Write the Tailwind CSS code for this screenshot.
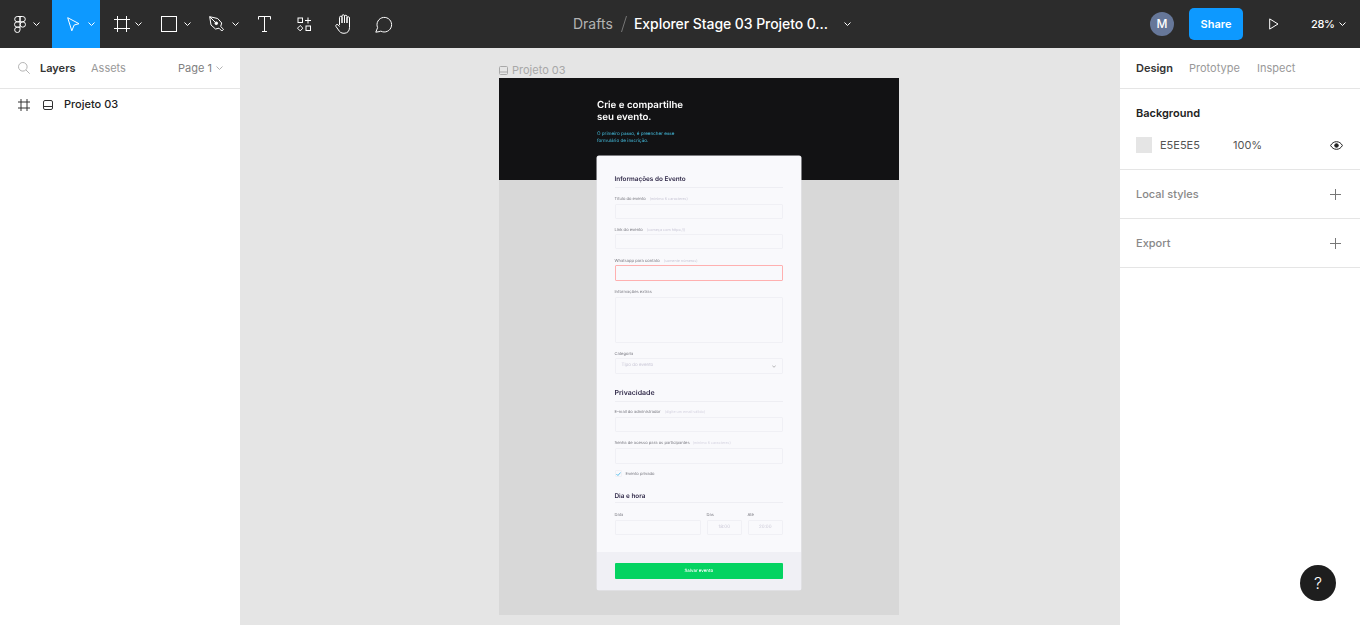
<!doctype html>
<html lang="pt-BR">
<head>
<meta charset="utf-8">
<title>Figma</title>
<script src="https://cdn.jsdelivr.net/npm/@tailwindcss/browser@4"></script>
</head>
<body class="m-0 overflow-hidden bg-white font-['Inter','Liberation_Sans',sans-serif]">
<div class="flex flex-col w-[1360px] h-[625px]">
  <!-- top bar -->
  <header class="flex items-center h-12 bg-[#2c2c2c] text-white shrink-0">
    <div class="flex items-center w-[52px] h-full pl-[14px]">
      <svg width="12" height="17" viewBox="0 0 12 17" fill="none" stroke="#fff" stroke-width="1"><path d="M6 .5H3.200a2.670 2.670 0 0 0 0 5.330H6zM6 .5h2.800a2.670 2.670 0 0 1 0 5.330H6zM6 5.830H3.200a2.670 2.670 0 0 0 0 5.340H6zM6 11.170H3.200A2.670 2.670 0 1 0 6 13.830z"/><circle cx="8.800" cy="8.500" r="2.670"/></svg>
      <svg class="ml-[7px]" width="7" height="4" viewBox="0 0 7 4" fill="none" stroke="#fff"><path d="M.5.500l3 3 3-3"/></svg>
    </div>
    <div class="flex items-center w-12 h-full bg-[#0d99ff] pl-[15px]">
      <svg width="13" height="15" viewBox="0 0 13 15" fill="none" stroke="#fff"><path d="M.7.700l11.300 6-4.800 1.300-2.400 5.800z"/></svg>
      <svg class="ml-[8px]" width="7" height="4" viewBox="0 0 7 4" fill="none" stroke="#fff"><path d="M.5.500l3 3 3-3"/></svg>
    </div>
    <div class="flex items-center w-12 h-full pl-[14px]">
      <svg width="16" height="16" viewBox="0 0 16 16" fill="none" stroke="#fff"><path d="M3.500 0v16M12.500 0v16M0 3.500h16M0 12.500h16"/></svg>
      <svg class="ml-[5px]" width="7" height="4" viewBox="0 0 7 4" fill="none" stroke="#fff"><path d="M.5.500l3 3 3-3"/></svg>
    </div>
    <div class="flex items-center w-12 h-full pl-[13px]">
      <svg width="16" height="16" viewBox="0 0 16 16" fill="none" stroke="#fff"><rect x=".5" y=".5" width="15" height="15"/></svg>
      <svg class="ml-[7px]" width="7" height="4" viewBox="0 0 7 4" fill="none" stroke="#fff"><path d="M.5.500l3 3 3-3"/></svg>
    </div>
    <div class="flex items-center w-12 h-full pl-[13px]">
      <svg width="16" height="16" viewBox="0 0 16 16" fill="none" stroke="#fff"><path d="M.7.700l8 1.800 4 4.500-1 3.500 2.800 2.800-1.700 1.700-2.800-2.800-3.500.8-4.500-4zM.7.700l5.800 5.800"/><circle cx="7.300" cy="7.300" r="1.300" fill="#fff"/></svg>
      <svg class="ml-[7px]" width="7" height="4" viewBox="0 0 7 4" fill="none" stroke="#fff"><path d="M.5.500l3 3 3-3"/></svg>
    </div>
    <div class="flex items-center justify-center w-10 h-full">
      <svg width="13" height="16" viewBox="0 0 13 16" fill="none" stroke="#fff"><path d="M.5 3.500V.5h12v3M6.500.5v15M4 15.500h5"/></svg>
    </div>
    <div class="flex items-center justify-center w-10 h-full">
      <svg width="15" height="15" viewBox="0 0 15 15" fill="none" stroke="#fff"><rect x="1" y="1" width="4.500" height="4.500"/><path d="M11 .5v6M8 3.500h6"/><path d="M3.200 8.500l2.700 2.700-2.700 2.700-2.700-2.700z"/><rect x="9" y="9" width="4.500" height="4.500"/></svg>
    </div>
    <div class="flex items-center justify-center w-10 h-full">
      <svg width="18" height="20" viewBox="0 0 18 20" fill="none" stroke="#fff"><path d="M4.500 11V3.500a1.200 1.200 0 0 1 2.500 0V9M7 9V2a1.250 1.250 0 0 1 2.500 0v7M9.500 9V2.500a1.250 1.250 0 0 1 2.500 0V9M12 9V4a1.250 1.250 0 0 1 2.500 0v9.500c0 3.500-2 5.800-5.500 5.800-3 0-4.500-1.500-5.500-3.300L1 12.500c-.8-1.500 1-2.800 2-1.700l1.500 1.700"/></svg>
    </div>
    <div class="flex items-center justify-center w-10 h-full">
      <svg width="18" height="17" viewBox="0 0 18 17" fill="none" stroke="#fff"><path d="M.8 16.200l1.800-4.600A7.300 7.300 0 1 1 5.800 15.100 7 7 0 0 1 5 15.500z"/></svg>
    </div>
    <div class="flex items-center ml-[169px] text-[14px] leading-5">
      <span class="text-[#b3b3b3] w-10">Drafts</span>
      <svg class="ml-[8px]" width="6" height="18" viewBox="0 0 6 18" fill="none" stroke="#777"><path d="M5.500 1L.5 17"/></svg>
      <span class="ml-[7px] font-medium tracking-[-0.07px] whitespace-nowrap w-[194px]">Explorer Stage 03 Projeto 0...</span>
      <svg class="ml-[16px]" width="7" height="4" viewBox="0 0 7 4" fill="none" stroke="#fff"><path d="M.5.500l3 3 3-3"/></svg>
    </div>
    <div class="flex items-center ml-auto h-full">
      <div class="flex items-center justify-center w-6 h-6 rounded-full bg-[#667799] text-[12px] font-medium">M</div>
      <div class="flex items-center justify-center ml-[15px] w-[54px] h-8 rounded-[5px] bg-[#0d99ff] text-[11px] font-semibold">Share</div>
      <svg class="ml-[26px]" width="10" height="12" viewBox="0 0 10 12" fill="none" stroke="#fff"><path d="M.7.900v10.200L9 6z"/></svg>
      <span class="ml-[32px] text-[11px] font-medium tracking-[-0.3px] w-[23px]">28%</span>
      <svg class="ml-[5px] mr-[14px]" width="7" height="4" viewBox="0 0 7 4" fill="none" stroke="#fff"><path d="M.5.500l3 3 3-3"/></svg>
    </div>
  </header>

  <div class="flex flex-1 min-h-0">
    <!-- left panel -->
    <aside class="w-60 shrink-0 bg-white text-[11px]">
      <div class="flex items-center h-[41px] border-b border-[#e5e5e5] pl-[18px]">
        <svg width="12" height="12" viewBox="0 0 12 12" fill="none" stroke="#b3b3b3"><circle cx="4.800" cy="4.800" r="4.300"/><path d="M8 8l3.700 3.700"/></svg>
        <span class="ml-[10px] w-[51px] font-semibold text-[#333]">Layers</span>
        <span class="text-[#999] w-[87px]">Assets</span>
        <span class="text-[#808080] w-[38px]">Page 1</span>
        <svg width="7" height="4" viewBox="0 0 7 4" fill="none" stroke="#b3b3b3"><path d="M.5.500l3 3 3-3"/></svg>
      </div>
      <div class="flex items-center h-[31px] pl-[18px]">
        <svg width="12" height="12" viewBox="0 0 12 12" fill="none" stroke="#333"><path d="M3 0v12M9 0v12M0 3h12M0 9h12"/></svg>
        <svg class="ml-[13px]" width="10" height="10" viewBox="0 0 10 10" fill="none" stroke="#333"><rect x=".5" y=".5" width="9" height="9" rx="1.500"/><path d="M.5 6.500h9"/></svg>
        <span class="ml-[11px] font-medium text-[#222]">Projeto 03</span>
      </div>
    </aside>

    <!-- canvas -->
    <main class="relative flex-1 bg-[#e5e5e5] overflow-hidden">
      <div class="absolute left-[259px] top-[16px] flex items-center h-3 gap-[4px] text-[11px] text-[#a8a8a8]">
        <svg width="9" height="9" viewBox="0 0 9 9" fill="none" stroke="#a8a8a8"><rect x=".5" y=".5" width="8" height="8" rx="1"/><path d="M.5 6h8"/></svg>
        <span>Projeto 03</span>
      </div>
      <div class="absolute left-[259px] top-[30px] w-[400px] h-[537px] bg-[#d8d8d8] blur-[0.25px] [text-rendering:geometricPrecision]">
        <div class="h-[102px] bg-[#121214] pl-[98px] pt-[22px]">
          <p class="text-[9.700px] leading-[12px] font-semibold text-white">Crie e compartilhe<br>seu evento.</p>
          <p class="mt-[7px] text-[4.600px] leading-[7px] text-[#45bfe0]">O primeiro passo, é preencher esse<br>formulário de inscrição.</p>
        </div>
        <!-- form card -->
        <div class="absolute left-[98px] top-[78px] w-[204px] h-[434px] flex flex-col rounded-[2px] bg-[#f9f9fc] overflow-hidden shadow-[0_0_0_0.5px_#e8e8ee]">
          <div class="flex-1 pl-[17.500px] pr-[18px] pt-[18px]">
            <h2 class="h-[13px] border-b border-[#eeeef3] text-[6.400px] leading-[11px] font-semibold text-[#322b4a] box-content">Informações do Evento</h2>

            <div class="mt-[7px] h-[9px] flex gap-[4px] text-[4.100px] leading-[8px] text-[#77777f]"><span>Título do evento</span><span class="text-[3.700px] text-[#c9c7d6]">(mínimo 6 caracteres)</span></div>
            <div class="h-[15px] rounded-[1px] border border-[#f0f0f5]"></div>

            <div class="mt-[7px] h-[9px] -mb-[1px] flex gap-[4px] text-[4.100px] leading-[8px] text-[#77777f]"><span>Link do evento</span><span class="text-[3.700px] text-[#c9c7d6]">(começa com https://)</span></div>
            <div class="h-[15px] rounded-[1px] border border-[#f0f0f5]"></div>

            <div class="mt-[8px] h-[9px] -mb-[1px] flex gap-[4px] text-[4.100px] leading-[8px] text-[#77777f]"><span>Whatsapp para contato</span><span class="text-[3.700px] text-[#c9c7d6]">(somente números)</span></div>
            <div class="h-[16px] rounded-[1px] border border-[#ffb0b0]"></div>

            <div class="mt-[7px] h-[9px] text-[4.100px] leading-[8px] text-[#77777f]">Informações extras</div>
            <div class="h-[46px] rounded-[1px] border border-[#f0f0f5]"></div>

            <div class="mt-[7px] h-[8px] text-[4.100px] leading-[8px] text-[#77777f]">Categoria</div>
            <div class="h-[16px] flex items-center justify-between px-[6px] pt-[1px] rounded-[1px] border border-[#f0f0f5] text-[4.500px] text-[#c9c7d6]">
              <span>Tipo do evento</span>
              <svg width="4" height="3" viewBox="0 0 4 3" fill="none" stroke="#999" stroke-width=".7"><path d="M.3.500L2 2.300 3.700.5"/></svg>
            </div>

            <h2 class="mt-[14px] h-[13px] border-b border-[#eeeef3] text-[7px] leading-[9px] font-semibold text-[#322b4a] box-content">Privacidade</h2>

            <div class="mt-[6px] h-[9px] flex gap-[4px] text-[4.100px] leading-[8px] text-[#77777f]"><span>E-mail do administrador</span><span class="text-[3.700px] text-[#d5d3e0]">(digite um email válido)</span></div>
            <div class="h-[15px] rounded-[1px] border border-[#f0f0f5]"></div>

            <div class="mt-[7px] h-[9px] flex gap-[3px] text-[4.100px] leading-[8px] text-[#77777f]"><span>Senha de acesso para os participantes</span><span class="text-[3.700px] text-[#d5d3e0]">(mínimo 6 caracteres)</span></div>
            <div class="h-[16px] rounded-[1px] border border-[#f0f0f5]"></div>

            <div class="mt-[6px] h-[7px] flex items-center gap-[4px] text-[4.100px] text-[#77777f]">
              <span class="flex items-center justify-center w-[7px] h-[7px] rounded-[1px] border border-[#f0f0f5]">
                <svg width="5" height="4" viewBox="0 0 5 4" fill="none" stroke="#36b3e8" stroke-width=".8"><path d="M.4 2l1.500 1.500L4.600.5"/></svg>
              </span>
              <span class="pt-[1px]">Evento privado</span>
            </div>

            <h2 class="mt-[14px] h-[11px] border-b border-[#eeeef3] text-[6.400px] leading-[11px] font-semibold text-[#322b4a] box-content">Dia e hora</h2>

            <div class="mt-[8px] grid grid-cols-[86.500px_35.500px_35.500px] gap-x-[5.500px]">
              <div><div class="h-[9px] text-[4.100px] leading-[8px] text-[#77777f]">Data</div><div class="h-[15px] rounded-[1px] border border-[#f0f0f5]"></div></div>
              <div><div class="h-[9px] text-[4.100px] leading-[8px] text-[#77777f]">Das</div><div class="h-[15px] flex items-center justify-center pt-[1px] rounded-[1px] border border-[#f0f0f5] text-[4.500px] text-[#c9c7d6]">18:00</div></div>
              <div><div class="h-[9px] text-[4.100px] leading-[8px] text-[#77777f]">Até</div><div class="h-[15px] flex items-center justify-center pt-[1px] rounded-[1px] border border-[#f0f0f5] text-[4.500px] text-[#c9c7d6]">20:00</div></div>
            </div>
          </div>
          <div class="h-[38px] flex items-center pl-[17.500px] pr-[18px] bg-[#f0f0f5]">
            <div class="flex items-center justify-center w-full h-[16px] pt-[2px] rounded-[1px] bg-[#04d361] text-[4.400px] font-medium text-white">Salvar evento</div>
          </div>
        </div>
      </div>
    </main>

    <!-- right panel -->
    <aside class="relative w-60 shrink-0 bg-white text-[11px]">
      <div class="flex items-center h-[41px] border-b border-[#e5e5e5] pl-4">
        <span class="w-[53px] font-semibold text-[#333]">Design</span>
        <span class="w-[68px] text-[#999]">Prototype</span>
        <span class="text-[#999]">Inspect</span>
      </div>
      <div class="h-[81px] border-b border-[#e5e5e5] px-4 pt-[16px]">
        <div class="h-4 leading-4 font-semibold text-[#222]">Background</div>
        <div class="flex items-center mt-[16px] h-4">
          <span class="w-4 h-4 bg-[#e5e5e5]"></span>
          <span class="ml-2 w-[73px] text-[#555]">E5E5E5</span>
          <span class="text-[#555]">100%</span>
          <svg class="ml-auto mr-[1px]" width="13" height="9" viewBox="0 0 13 9" fill="none" stroke="#222"><path d="M.6 4.500C2 2 4 .7 6.500.7S11 2 12.400 4.500C11 7 9 8.300 6.500 8.300S2 7 .6 4.500z"/><circle cx="6.500" cy="4.500" r="1.800" fill="#222"/></svg>
        </div>
      </div>
      <div class="flex items-center justify-between h-[49px] border-b border-[#e5e5e5] px-4 font-medium text-[#888]">
        <span>Local styles</span>
        <svg class="mr-[3px]" width="11" height="11" viewBox="0 0 11 11" fill="none" stroke="#777"><path d="M5.500 0v11M0 5.500h11"/></svg>
      </div>
      <div class="flex items-center justify-between h-[49px] border-b border-[#e5e5e5] px-4 font-medium text-[#888]">
        <span>Export</span>
        <svg class="mr-[3px]" width="11" height="11" viewBox="0 0 11 11" fill="none" stroke="#777"><path d="M5.500 0v11M0 5.500h11"/></svg>
      </div>
      <div class="absolute right-[24px] bottom-[24px] flex items-center justify-center w-9 h-9 rounded-full bg-[#1e1e1e] text-white text-[16px] font-light">?</div>
    </aside>
  </div>
</div>
</body>
</html>
